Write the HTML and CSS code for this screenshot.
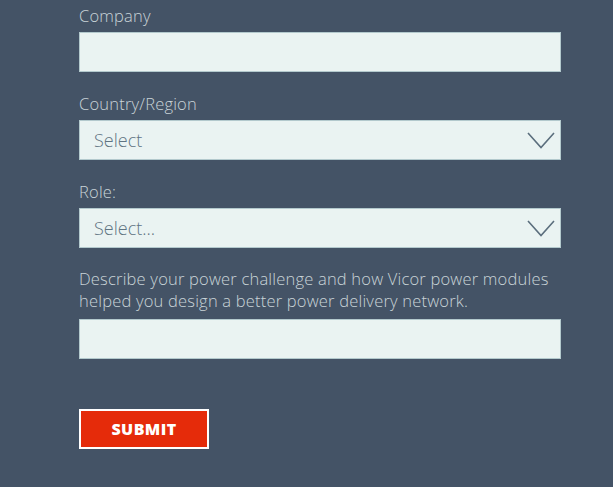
FILE: index.html
```html
<!DOCTYPE html>
<html lang="en">
<head>
    <meta charset="UTF-8">
    <meta name="viewport" content="width=device-width, initial-scale=1.0">
    <title>Share Your Story</title>
    <link rel="stylesheet" href="styles.css">
</head>
<body>
    <form class="story-form" onsubmit="return false">
        <div class="field">
            <label for="company">Company</label>
            <input type="text" id="company" class="text-input">
        </div>

        <div class="field">
            <label for="country">Country/Region</label>
            <div class="select-wrap">
                <select id="country" class="select-input">
                    <option>Select</option>
                </select>
                <svg class="chevron" width="28" height="17" viewBox="0 0 28 17"><path d="M1 1 L14 15.5 L27 1" fill="none" stroke="#5b6e7d" stroke-width="1.6"/></svg>
            </div>
        </div>

        <div class="field">
            <label for="role">Role:</label>
            <div class="select-wrap">
                <select id="role" class="select-input">
                    <option>Select...</option>
                </select>
                <svg class="chevron" width="28" height="17" viewBox="0 0 28 17"><path d="M1 1 L14 15.5 L27 1" fill="none" stroke="#5b6e7d" stroke-width="1.6"/></svg>
            </div>
        </div>

        <div class="field">
            <label for="story" class="long-label">Describe your power challenge and how Vicor power modules helped you design a better power delivery network.</label>
            <input type="text" id="story" class="text-input">
        </div>

        <button type="submit" class="submit-btn">SUBMIT</button>
    </form>
</body>
</html>
```

FILE: styles.css
```css
html, body {
    margin: 0;
    background: #445366;
}
body {
    font-family: "Open Sans", "Noto Sans", sans-serif;
    color: #c9d4d8;
}
.story-form {
    width: 482px;
    padding: 4px 0 40px 79px;
}
.field {
    margin-bottom: 20px;
}
.field label {
    display: block;
    font-size: 16.5px;
    font-weight: 300;
    line-height: 24px;
    letter-spacing: 0.2px;
    margin-bottom: 4px;
}
.field .long-label {
    line-height: 22px;
    margin-top: 0;
    margin-bottom: 7px;
}
.text-input,
.select-input {
    box-sizing: border-box;
    display: block;
    width: 482px;
    height: 40px;
    margin: 0;
    border: 1px solid #b3c9cd;
    background: #eaf3f2;
    font-family: "Open Sans", "Noto Sans", sans-serif;
    font-size: 18px;
    font-weight: 300;
    color: #5f7482;
    outline: none;
}
.select-input {
    appearance: none;
    -webkit-appearance: none;
    padding: 0 0 0 14px;
    border-radius: 0;
}
.select-wrap {
    position: relative;
}
.chevron {
    position: absolute;
    right: 6px;
    top: 12px;
    pointer-events: none;
}
.submit-btn {
    margin-top: 30px;
    width: 130px;
    height: 40px;
    background: #e52b0a;
    border: 2px solid #ffffff;
    color: #ffffff;
    font-family: "Open Sans", "Noto Sans", sans-serif;
    font-weight: 800;
    font-size: 16px;
    letter-spacing: 0.4px;
    padding: 0;
    cursor: pointer;
}
```
